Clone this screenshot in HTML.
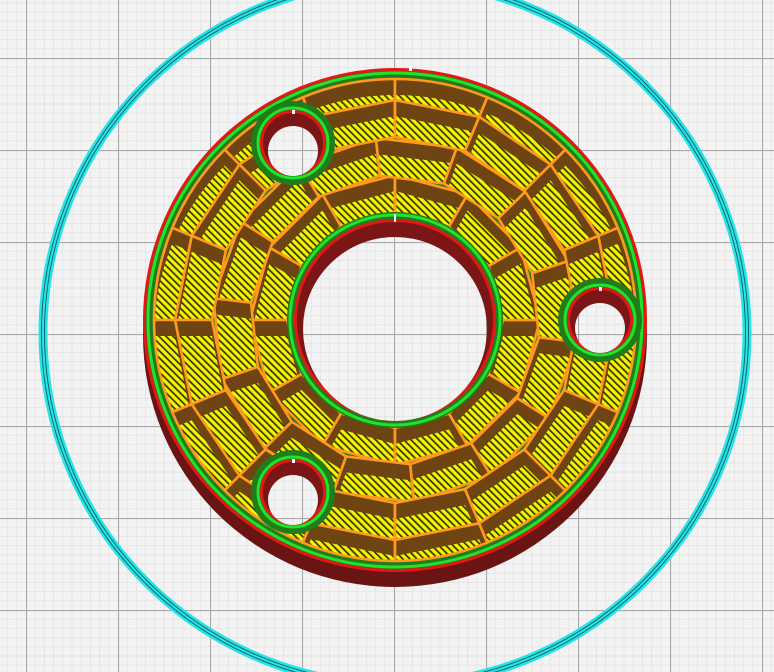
<!DOCTYPE html>
<html><head><meta charset="utf-8"><style>html,body{margin:0;padding:0;background:#f2f2f2;overflow:hidden}svg{display:block}</style></head>
<body>
<svg id="s" width="774" height="672" viewBox="0 0 774 672" xmlns="http://www.w3.org/2000/svg">
<defs>
<pattern id="grid" width="92" height="92" patternUnits="userSpaceOnUse" patternTransform="translate(26,58)">
<rect width="92" height="92" fill="#f3f3f3"/>
<g stroke="#e6e6e6" stroke-width="1">
<path d="M9.2 0V92M18.4 0V92M27.6 0V92M36.8 0V92M46 0V92M55.2 0V92M64.4 0V92M73.6 0V92M82.8 0V92M0 9.2H92M0 18.4H92M0 27.6H92M0 36.8H92M0 46H92M0 55.2H92M0 64.4H92M0 73.6H92M0 82.8H92"/>
</g>
<path d="M0.5 0V92M0 0.5H92" stroke="#a9a9a9" stroke-width="1.2"/>
</pattern>
<pattern id="hatch" width="5" height="5" patternUnits="userSpaceOnUse" patternTransform="rotate(-45)">
<rect width="5" height="5" fill="#f5f500"/>
<rect width="1.8" height="5" fill="#3c3a08"/>
</pattern>
</defs>
<rect width="774" height="672" fill="url(#grid)"/>
<circle cx="395" cy="333" r="352" fill="none" stroke="#25e3e6" stroke-width="9"/>
<circle cx="395" cy="333" r="350.5" fill="none" stroke="#175c5e" stroke-width="0.9"/>
<circle cx="395" cy="333" r="353.5" fill="none" stroke="#175c5e" stroke-width="0.9"/>
<circle cx="395" cy="335" r="252" fill="#6a1414"/>
<circle cx="395" cy="320" r="252" fill="#e21818"/>
<circle cx="395" cy="320" r="249" fill="#1f7d1c"/>
<circle cx="395" cy="320" r="247" fill="none" stroke="#22e32a" stroke-width="3"/>
<g id="cells"></g>
<circle cx="395" cy="320" r="108" fill="#1f7d1c"/>
<circle cx="395" cy="320" r="105" fill="none" stroke="#22e32a" stroke-width="3"/>
<circle cx="395" cy="320" r="101" fill="#e21818"/>
<circle cx="395" cy="320" r="98" fill="#7a1616"/>
<circle cx="395" cy="329" r="92" fill="url(#grid)"/>
<rect x="394" y="214" width="2" height="8" fill="#fff"/>
<g id="holes"></g>
<rect x="409" y="66" width="3" height="5" fill="#fff"/>
</svg>
<script>
var NS="http://www.w3.org/2000/svg",cx=395,cy=320;
var radii=[108,145,183,220,241],counts=[12,14,16,16],offs=[0,6,0,0];
var g=document.getElementById('cells'),defs=document.querySelector('defs');
function P(r,a){a=a*Math.PI/180;return (cx+r*Math.cos(a)).toFixed(1)+' '+(cy-r*Math.sin(a)).toFixed(1);}
var id=0;
for(var i=0;i<4;i++){
 var r1=radii[i],r2=radii[i+1],n=counts[i],st=360/n;
 for(var k=0;k<n;k++){
  var a1=90+offs[i]+k*st,a2=a1+st;
  var d;
  if(i==3){d='M'+P(r1,a1)+' L'+P(r2,a1)+' A'+r2+' '+r2+' 0 0 0 '+P(r2,a2)+' L'+P(r1,a2)+' Z';}
  else d='M'+P(r1,a1)+' L'+P(r2,a1)+' L'+P(r2,a2)+' L'+P(r1,a2)+' Z';
  id++;
  var cp=document.createElementNS(NS,'clipPath');cp.setAttribute('id','c'+id);
  var p0=document.createElementNS(NS,'path');p0.setAttribute('d',d);cp.appendChild(p0);defs.appendChild(cp);
  var b=document.createElementNS(NS,'path');b.setAttribute('d',d);b.setAttribute('fill','#6e4512');g.appendChild(b);
  var y=document.createElementNS(NS,'path');y.setAttribute('d',d);y.setAttribute('fill','url(#hatch)');
  y.setAttribute('transform','translate(0,16)');
  var gy=document.createElementNS(NS,'g');gy.setAttribute('clip-path','url(#c'+id+')');gy.appendChild(y);g.appendChild(gy);
  var o=document.createElementNS(NS,'path');o.setAttribute('d',d);o.setAttribute('fill','none');o.setAttribute('stroke','#ff9a1e');o.setAttribute('stroke-width','2.6');o.setAttribute('stroke-linejoin','round');g.appendChild(o);
 }
}
var h=document.getElementById('holes');
[[293,143],[600,320],[293,492]].forEach(function(c){
 h.innerHTML+='<circle cx="'+c[0]+'" cy="'+c[1]+'" r="42" fill="#1f7d1c"/>'+
 '<circle cx="'+c[0]+'" cy="'+c[1]+'" r="35" fill="none" stroke="#22e32a" stroke-width="3"/>'+
 '<circle cx="'+c[0]+'" cy="'+c[1]+'" r="33" fill="#e21818"/>'+
 '<circle cx="'+c[0]+'" cy="'+c[1]+'" r="30" fill="#7a1616"/>'+
 '<circle cx="'+c[0]+'" cy="'+(c[1]+8)+'" r="25" fill="url(#grid)"/>'+
 '<rect x="'+(c[0]-1)+'" y="'+(c[1]-33)+'" width="3" height="4" fill="#fff"/>';
});
</script>
</body></html>
